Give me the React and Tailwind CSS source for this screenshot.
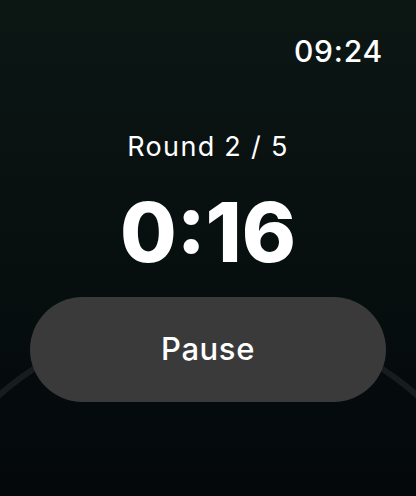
export default function App() {
  return (
    <div
      className="relative w-full h-[496px] overflow-hidden bg-gradient-to-b from-[#0c1714] to-[#04080a] text-white"
      style={{ fontFamily: 'Inter, "Noto Sans", sans-serif' }}
    >
      {/* progress ring behind the button */}
      <svg className="absolute inset-0 pointer-events-none" width="416" height="496" viewBox="0 0 416 496">
        <circle cx="208" cy="635" r="318" fill="none" stroke="#171c1d" strokeWidth="6" />
      </svg>

      <div className="relative flex flex-col">
        <div className="flex justify-end pt-[33px] pr-[33px]">
          <span className="text-[30px] leading-[36px] font-medium tracking-[0.8px]">09:24</span>
        </div>

        <div className="flex flex-col items-center mt-[64px]">
          <div className="text-[27px] leading-none font-normal tracking-[1.3px]">Round 2 / 5</div>
          <div className="mt-[32px] text-[82px] leading-none font-extrabold">0:16</div>
        </div>

        <div className="mt-[23px] px-[30px]">
          <button className="w-full h-[105px] rounded-full bg-[#3a3a3a] text-[31px] font-medium tracking-[0.6px]">
            Pause
          </button>
        </div>
      </div>
    </div>
  );
}
